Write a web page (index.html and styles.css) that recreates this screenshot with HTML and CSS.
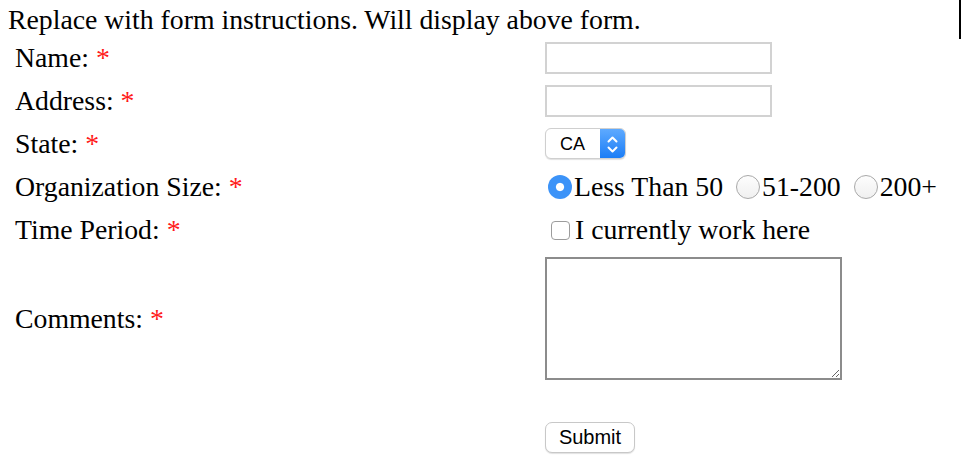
FILE: index.html
```html
<!DOCTYPE html>
<html lang="en">
<head>
<meta charset="utf-8">
<title>Form</title>
<link rel="stylesheet" href="styles.css">
</head>
<body>
<p class="intro">Replace with form instructions. Will display above form.</p>
<form class="form">
  <div class="row">
    <label class="lbl">Name: <span class="req">*</span></label>
    <div class="ctl"><input class="txt" type="text"></div>
  </div>
  <div class="row">
    <label class="lbl">Address: <span class="req">*</span></label>
    <div class="ctl"><input class="txt" type="text"></div>
  </div>
  <div class="row">
    <label class="lbl">State: <span class="req">*</span></label>
    <div class="ctl">
      <span class="sel">
        <select class="sel-box"><option>CA</option></select>
        <span class="sel-btn">
          <svg width="25" height="31" viewBox="0 0 25 31"><path d="M8.5 12.5 L12.5 8.5 L16.5 12.5 M8.5 18.5 L12.5 22.5 L16.5 18.5" fill="none" stroke="#fff" stroke-width="2" stroke-linecap="round" stroke-linejoin="round"/></svg>
        </span>
      </span>
    </div>
  </div>
  <div class="row">
    <label class="lbl">Organization Size: <span class="req">*</span></label>
    <div class="ctl opts">
      <input class="radio first" type="radio" name="size" checked><span>Less Than 50</span>
      <input class="radio" type="radio" name="size"><span>51-200</span>
      <input class="radio" type="radio" name="size"><span>200+</span>
    </div>
  </div>
  <div class="row">
    <label class="lbl">Time Period: <span class="req">*</span></label>
    <div class="ctl opts">
      <input class="check" type="checkbox"><span>I currently work here</span>
    </div>
  </div>
  <div class="row tall">
    <label class="lbl">Comments: <span class="req">*</span></label>
    <div class="ctl"><textarea class="area"></textarea></div>
  </div>
  <div class="row submit-row">
    <span></span>
    <div class="ctl"><button class="btn" type="button">Submit</button></div>
  </div>
</form>
<div class="edge"></div>
</body>
</html>
```
FILE: styles.css
```css
html, body {
  background: #fff;
}
body {
  margin: 0;
  padding: 3px 0 0 8px;
  font-family: "Liberation Serif", "Times New Roman", serif;
  font-size: 27.75px;
  color: #000;
}
.intro {
  margin: 0;
  height: 33px;
  line-height: 33px;
  white-space: nowrap;
}
.form {
  margin-left: 7px;
}
.row {
  display: grid;
  grid-template-columns: 530px auto;
  align-items: center;
  height: 43px;
}
.row.tall {
  height: 135px;
}
.row.submit-row {
  margin-top: 30px;
}
.lbl {
  white-space: nowrap;
}
.req {
  color: #ff1a1a;
}
.ctl {
  display: flex;
  align-items: center;
}
.txt {
  box-sizing: border-box;
  width: 227px;
  height: 32px;
  margin: 0;
  border: 2px solid #d2d2d2;
  background: #fff;
  outline: none;
}
.sel {
  display: inline-flex;
  box-sizing: border-box;
  width: 81px;
  height: 31px;
  border: 1px solid #cfcfcf;
  border-radius: 6px;
  overflow: hidden;
  background: #fff;
  box-shadow: 0 1px 1px rgba(0,0,0,0.12);
}
.sel-box {
  appearance: none;
  -webkit-appearance: none;
  border: none;
  outline: none;
  background: transparent;
  width: 55px;
  height: 100%;
  padding: 0 0 0 14px;
  margin: 0;
  font-family: "Liberation Sans", Arial, sans-serif;
  font-size: 18px;
  color: #000;
}
.sel-btn {
  display: flex;
  width: 25px;
  height: 100%;
  background: linear-gradient(#5eaaff, #1b7df6);
}
.opts {
  white-space: nowrap;
}
.radio {
  appearance: none;
  -webkit-appearance: none;
  box-sizing: border-box;
  width: 24px;
  height: 24px;
  margin: 0 2px 0 13px;
  border-radius: 50%;
  border: 1.5px solid #a9a9a9;
  background: linear-gradient(#fdfdfd, #f0f0f0);
}
.radio.first {
  margin-left: 3px;
}
.radio:checked {
  border: none;
  background: radial-gradient(circle, #fff 0 3.6px, #3c93f8 4.6px);
}
.check {
  appearance: none;
  -webkit-appearance: none;
  box-sizing: border-box;
  width: 19px;
  height: 19px;
  margin: 2px 5px 0 6px;
  border: 1.5px solid #9c9c9c;
  border-radius: 4px;
  background: #fff;
}
.area {
  box-sizing: border-box;
  width: 297px;
  height: 123px;
  margin: 0;
  border: 2px solid #8c8c8c;
  background: #fff;
  outline: none;
}
.btn {
  box-sizing: border-box;
  width: 90px;
  height: 31px;
  margin: 0;
  padding: 0;
  border: 1.5px solid #c8c8c8;
  border-radius: 7px;
  background: #fff;
  box-shadow: 0 1px 1px rgba(0,0,0,0.12);
  font-family: "Liberation Sans", Arial, sans-serif;
  font-size: 20px;
  color: #000;
}
.edge {
  position: absolute;
  top: 0;
  right: 0;
  width: 2px;
  height: 39px;
  background: #000;
}
```
